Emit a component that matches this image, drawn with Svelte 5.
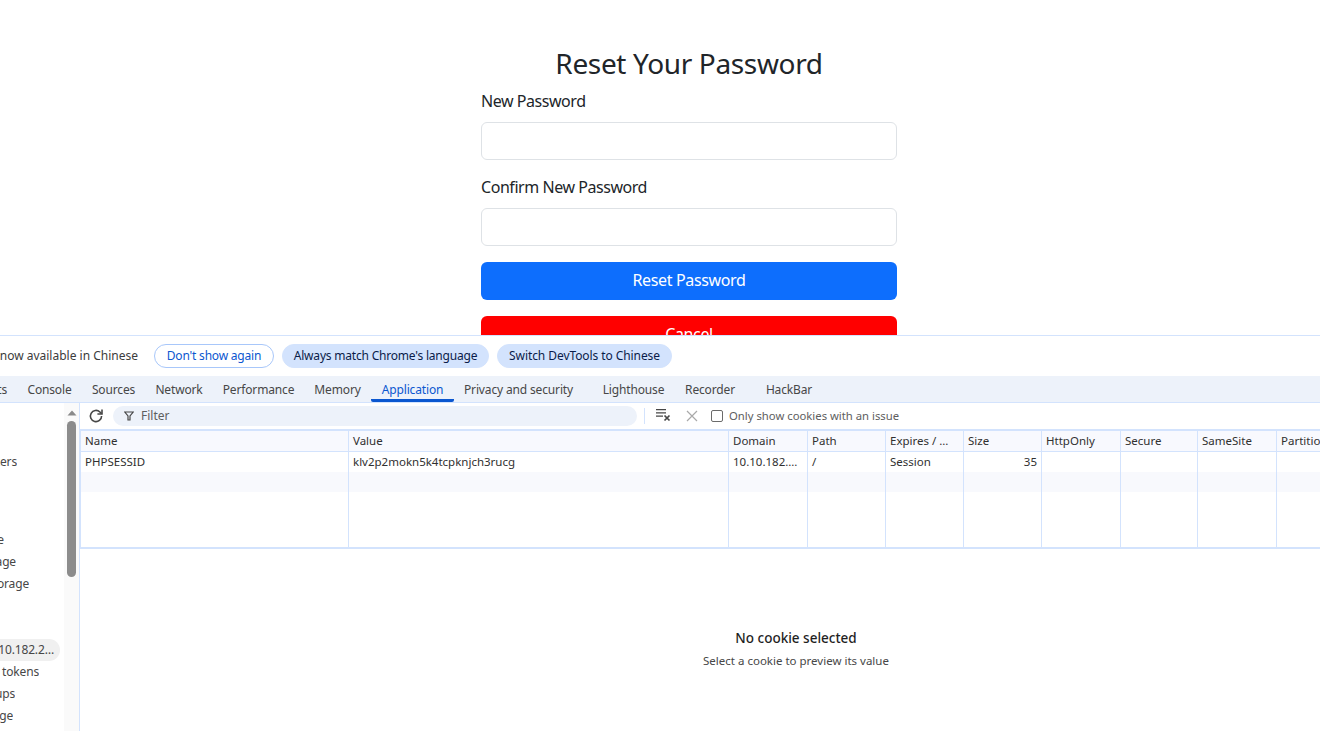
<script>
  const tabs = [
    { label: 'Elements', width: 17, end: true },
    { label: 'Console', width: 65 },
    { label: 'Sources', width: 63 },
    { label: 'Network', width: 68 },
    { label: 'Performance', width: 91 },
    { label: 'Memory', width: 67 },
    { label: 'Application', width: 83, active: true },
    { label: 'Privacy and security', width: 129 },
    { label: 'Lighthouse', width: 101 },
    { label: 'Recorder', width: 52 },
    { label: 'HackBar', width: 106 }
  ];
  const columns = [
    { label: 'Name', value: 'PHPSESSID', width: 268 },
    { label: 'Value', value: 'klv2p2mokn5k4tcpknjch3rucg', width: 380 },
    { label: 'Domain', value: '10.10.182.…', width: 79 },
    { label: 'Path', value: '/', width: 78 },
    { label: 'Expires / …', value: 'Session', width: 78 },
    { label: 'Size', value: '35', width: 78, right: true },
    { label: 'HttpOnly', value: '', width: 79 },
    { label: 'Secure', value: '', width: 77 },
    { label: 'SameSite', value: '', width: 79 },
    { label: 'Partition', value: '', width: 60 }
  ];
  const tree = [
    { label: '', end: 0, gap: 0 }, { label: '', end: 0, gap: 0 },
    { label: 'Service workers', end: 17, gap: 0 },
    { label: '', end: 0, gap: 0 }, { label: '', end: 0, gap: 0 },
    { label: 'Storage', end: 4, gap: 12 },
    { label: 'Local storage', end: 16, gap: 0 },
    { label: 'Session storage', end: 29, gap: 0 },
    { label: '', end: 0, gap: 0 }, { label: '', end: 0, gap: 0 },
    { label: 'http://10.10.182.2…', end: 54, gap: 0, selected: true },
    { label: 'Private state tokens', end: 39, gap: 0 },
    { label: 'Interest groups', end: 15, gap: 0 },
    { label: 'Shared storage', end: 13, gap: 0 }
  ];
</script>

<div class="page">
  <section class="site">
    <h1>Reset Your Password</h1>
    <form class="form">
      <label for="p1">New Password</label>
      <input id="p1" type="password" />
      <label for="p2">Confirm New Password</label>
      <input id="p2" type="password" />
      <button type="button" class="btn primary">Reset Password</button>
      <button type="button" class="btn danger">Cancel</button>
    </form>
  </section>

  <section class="devtools">
    <div class="infobar">
      <div class="clip-end"><span>DevTools is now available in Chinese</span></div>
      <button type="button" class="chip outline">Don't show again</button>
      <button type="button" class="chip">Always match Chrome's language</button>
      <button type="button" class="chip">Switch DevTools to Chinese</button>
    </div>

    <div class="tabs">
      {#each tabs as t}
        <div class="tab" class:active={t.active} class:end={t.end} style="width:{t.width}px"><span>{t.label}</span></div>
      {/each}
    </div>

    <div class="body">
      <aside class="side">
        <div class="tree">
          {#each tree as n}
            <div class="node" class:selected={n.selected} style="margin-top:{n.gap}px">
              <div class="node-text" style="width:{n.end}px"><span>{n.label}</span></div>
            </div>
          {/each}
        </div>
        <div class="scroll">
          <svg class="arrow" width="10" height="6" viewBox="0 0 10 6"><path d="M5 0.5 9.5 5.5H0.5Z" fill="#8a8a8a" /></svg>
          <div class="thumb"></div>
        </div>
      </aside>

      <main class="panel">
        <div class="toolbar">
          <svg class="refresh" width="16" height="16" viewBox="0 0 16 16" fill="none" stroke="#474747" stroke-width="1.6">
            <path d="M13.6 8a5.6 5.6 0 1 1-1.7-4L13.6 5.6" />
            <path d="M14 1.4V6H9.4" fill="none" />
          </svg>
          <div class="filter">
            <svg width="10" height="10" viewBox="0 0 10 10" fill="none" stroke="#474747" stroke-width="1.2"><path d="M0.8 1H9.2L6 5V9H4V5Z" /></svg>
            <span>Filter</span>
          </div>
          <div class="sep"></div>
          <svg class="clear" width="16" height="14" viewBox="0 0 16 14" fill="none">
            <path d="M1 0.7H11M1 3.9H11M1 7.2H8" stroke="#474747" stroke-width="1.2" />
            <path d="M9.5 6.5 14.5 11.5M14.5 6.5 9.5 11.5" stroke="#474747" stroke-width="1.7" />
          </svg>
          <svg class="cross" width="12" height="12" viewBox="0 0 12 12" fill="none" stroke="#a9a9a9" stroke-width="1.2"><path d="M1 1 11 11M11 1 1 11" /></svg>
          <span class="check"></span>
          <span class="check-label">Only show cookies with an issue</span>
        </div>

        <div class="table">
          <div class="row head">
            {#each columns as c}
              <div class="cell" style="width:{c.width}px">{c.label}</div>
            {/each}
          </div>
          <div class="row first">
            {#each columns as c}
              <div class="cell" class:right={c.right} style="width:{c.width}px">{c.value}</div>
            {/each}
          </div>
          <div class="row stripe">
            {#each columns as c}
              <div class="cell" style="width:{c.width}px"></div>
            {/each}
          </div>
          <div class="row filler">
            {#each columns as c}
              <div class="cell" style="width:{c.width}px"></div>
            {/each}
          </div>
        </div>

        <div class="empty">
          <div class="empty-title">No cookie selected</div>
          <div class="empty-sub">Select a cookie to preview its value</div>
        </div>
      </main>
    </div>
  </section>
</div>

<style>
  :global(body) { margin: 0; background: #fff; }
  .page {
    height: 731px; width: 1320px; overflow: hidden;
    display: flex; flex-direction: column;
    font-family: "Noto Sans", sans-serif;
  }
  .site { height: 335px; overflow: hidden; flex: none; padding-left: 481px; box-sizing: border-box; }
  h1 {
    width: 416px; margin: 44px 0 7px; text-align: center;
    font-size: 28px; font-weight: 400; line-height: 38px; color: #212529; letter-spacing: -0.35px;
  }
  .form { width: 416px; display: flex; flex-direction: column; }
  label { font-size: 16px; line-height: 24px; color: #212529; margin-bottom: 9px; letter-spacing: -0.45px; }
  input {
    height: 38px; box-sizing: border-box; border: 1px solid #dee2e6; border-radius: 6px;
    margin: 0 0 15px; background: #fff; padding: 0;
  }
  #p2 { margin-bottom: 16px; }
  .btn {
    height: 38px; flex: none; border: 0; border-radius: 6px; color: #fff;
    font: 400 16px/24px "Noto Sans", sans-serif; letter-spacing: -0.35px; padding: 0 0 2px; margin-bottom: 16px;
  }
  .primary { background: #0d6efd; }
  .danger { background: #f00; }

  .devtools { flex: 1; min-height: 0; display: flex; flex-direction: column; border-top: 1px solid #d3e3fd; color: #1f1f1f; font-size: 12px; }
  .infobar { height: 40px; flex: none; display: flex; align-items: center; gap: 8px; box-sizing: border-box; }
  .clip-end { width: 138px; display: flex; justify-content: flex-end; overflow: hidden; white-space: nowrap; margin-right: 8px; color: #3c3c3c; padding-bottom: 2px; }
  .clip-end span { flex: none; }
  .chip {
    height: 24px; border: 1px solid #d3e3fd; border-radius: 12px; background: #d3e3fd; color: #0a1c4a;
    font: 12px "Noto Sans", sans-serif; padding: 0 0 2px; flex: none; width: 207px; letter-spacing: -0.2px;
  }
  .chip:last-child { width: 175px; letter-spacing: -0.08px; }
  .chip.outline { background: #fff; color: #0b57d0; border-color: #a8c7fa; width: 120px; }

  .tabs { height: 27px; flex: none; display: flex; background: #edf2fa; border-bottom: 1px solid #d3e3fd; box-sizing: border-box; color: #474747; letter-spacing: -0.15px; }
  .tab { flex: none; display: flex; justify-content: center; align-items: center; white-space: nowrap; overflow: hidden; box-sizing: border-box; border-bottom: 3px solid transparent; padding-top: 4px; }
  .tab.end { justify-content: flex-end; padding-right: 10px; }
  .tab span { flex: none; }
  .tab.active { color: #0b57d0; border-bottom-color: #0b57d0; border-radius: 0 0 2px 2px; }

  .body { flex: 1; min-height: 0; display: flex; }
  .side { width: 80px; flex: none; display: flex; border-right: 1px solid #d3e3fd; box-sizing: border-box; }
  .tree { width: 64px; flex: none; padding-top: 4px; box-sizing: border-box; color: #474747; letter-spacing: -0.15px; }
  .node { height: 22px; display: flex; align-items: center; border-radius: 0 11px 11px 0; width: 60px; }
  .node.selected { background: #f0f0f0; }
  .node-text { display: flex; justify-content: flex-end; overflow: hidden; white-space: nowrap; padding-bottom: 1px; }
  .node-text span { flex: none; }
  .scroll { flex: 1; background: #fafafa; display: flex; flex-direction: column; align-items: center; padding-top: 7px; }
  .arrow { flex: none; }
  .thumb { width: 9px; height: 156px; background: #8c8c8c; border-radius: 5px; margin-top: 5px; }

  .panel { width: 1432px; flex: none; display: flex; flex-direction: column; }
  .toolbar { height: 26px; flex: none; display: flex; align-items: center; padding-left: 8px; box-sizing: border-box; }
  .refresh { flex: none; margin-right: 9px; }
  .filter {
    width: 524px; height: 20px; flex: none; border-radius: 10px; background: #edf2fa;
    display: flex; align-items: center; gap: 7px; padding-left: 11px; box-sizing: border-box; color: #5e5e5e; font-size: 12px;
  }
  .filter span { padding-bottom: 2px; }
  .sep { width: 1px; height: 16px; background: #d3e3fd; margin: 0 10px 0 7px; flex: none; }
  .clear { flex: none; margin-right: 15px; }
  .cross { flex: none; margin-right: 13px; }
  .check { width: 10px; height: 10px; border: 1px solid #6b6b6b; border-radius: 2px; flex: none; margin-right: 6px; }
  .check-label { color: #5e5e5e; font-size: 11.3px; white-space: nowrap; padding-bottom: 2px; }

  .table { height: 120px; flex: none; display: flex; flex-direction: column; border-top: 2px solid #d3e3fd; border-bottom: 2px solid #d3e3fd; border-left: 1px solid #d3e3fd; box-sizing: border-box; overflow: hidden; }
  .row { display: flex; flex: none; height: 20px; }
  .row.head { background: #f8f9fe; border-bottom: 1px solid #d3e3fd; box-sizing: content-box; }
  .row.stripe { background: #f8f9fd; }
  .row.filler { height: 55px; }
  .cell {
    flex: none; box-sizing: border-box; border-right: 1px solid #d3e3fd; padding: 0 4px;
    line-height: 20px; font-size: 11.5px; white-space: nowrap; overflow: hidden; color: #303030;
  }
  .cell.right { text-align: right; }

  .empty { flex: 1; display: flex; flex-direction: column; align-items: center; padding-top: 79px; }
  .empty-title { font-size: 13.5px; font-weight: 500; line-height: 20px; color: #1f1f1f; }
  .empty-sub { font-size: 11.5px; line-height: 16px; margin-top: 5px; color: #474747; }
</style>
